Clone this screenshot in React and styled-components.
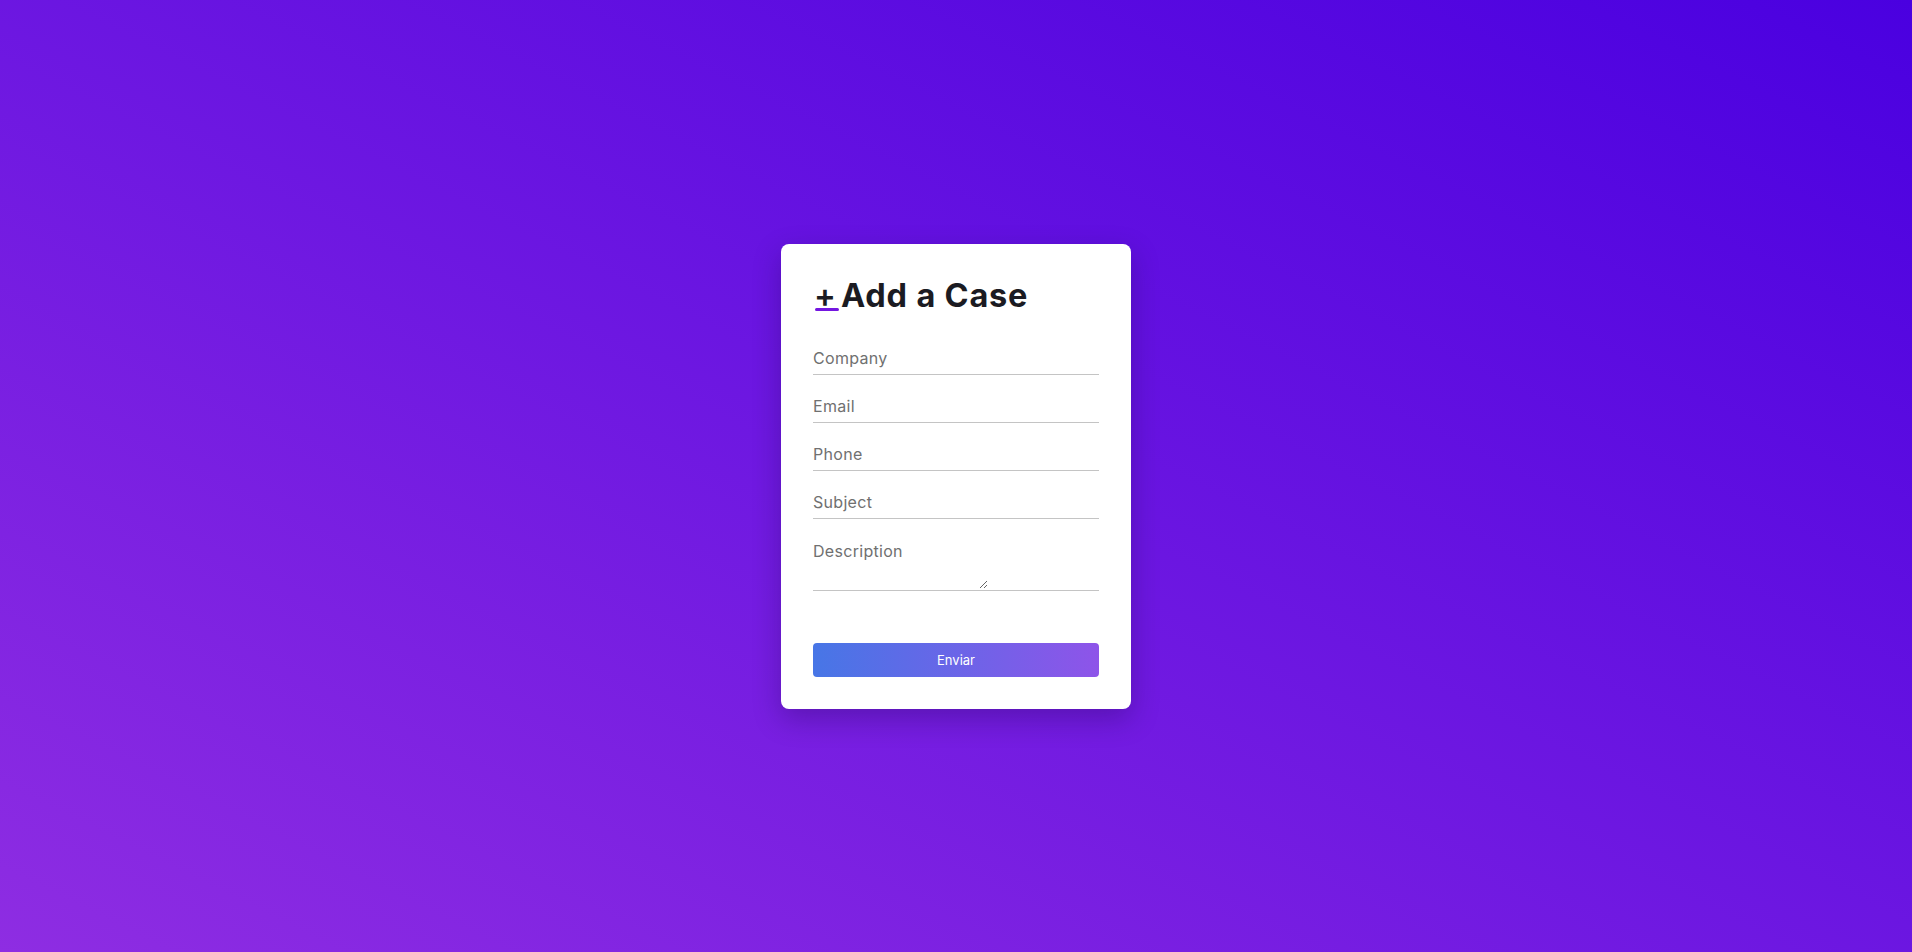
import styled, {createGlobalStyle} from 'styled-components';

const fields = ['Company', 'Email', 'Phone', 'Subject'];

export default function App() {
  return (
    <>
      <GlobalStyle />
      <Page>
        <Card>
          <Title>
            <Plus>+</Plus>Add a Case
          </Title>
          <Form onSubmit={e => e.preventDefault()}>
            {fields.map(field => (
              <Input key={field} type="text" placeholder={field} />
            ))}
            <TextareaWrap>
              <Textarea placeholder="Description" />
            </TextareaWrap>
            <Button type="submit">Enviar</Button>
          </Form>
        </Card>
      </Page>
    </>
  );
}

const GlobalStyle = createGlobalStyle`
  * {
    box-sizing: border-box;
  }

  body {
    margin: 0;
    font-family: Inter, "Noto Sans", sans-serif;
  }
`;

const Page = styled.main`
  min-height: 100vh;
  display: flex;
  align-items: center;
  justify-content: center;
  background: linear-gradient(to top right, #8e2de2, #4a00e0);
`;

const Card = styled.section`
  width: 350px;
  padding: 32px;
  background-color: #fff;
  border-radius: 8px;
  box-shadow: 0 10px 28px rgba(20, 0, 60, 0.28);
`;

const Title = styled.h1`
  margin: 0 0 21px;
  font-size: 32.5px;
  line-height: 40px;
  font-weight: 700;
  color: #1b1b22;
  letter-spacing: 0.8px;
`;

const Plus = styled.span`
  position: relative;
  display: inline-block;
  width: 28px;
  padding-left: 1px;
  font-weight: 600;

  &::after {
    content: '';
    position: absolute;
    left: 2px;
    bottom: 5px;
    width: 24px;
    height: 3px;
    border-radius: 2px;
    background-color: #7416e0;
  }
`;

const Form = styled.form`
  display: flex;
  flex-direction: column;
  gap: 10px;
`;

const Input = styled.input`
  width: 100%;
  height: 38px;
  padding: 12px 0 6px;
  border: none;
  border-bottom: 1px solid #c4c4c4;
  outline: none;
  background: transparent;
  font-family: Inter, "Noto Sans", sans-serif;
  font-size: 16px;
  line-height: 20px;
  letter-spacing: 0.3px;
  color: #333;

  &::placeholder {
    color: #707070;
  }
`;

const TextareaWrap = styled.div`
  height: 62px;
  border-bottom: 1px solid #c4c4c4;
`;

const Textarea = styled.textarea`
  display: block;
  width: 175px;
  height: 60px;
  padding: 12px 0 0;
  border: none;
  outline: none;
  background: transparent;
  font-family: Inter, "Noto Sans", sans-serif;
  font-size: 16px;
  line-height: 20px;
  letter-spacing: 0.3px;
  color: #333;

  &::placeholder {
    color: #707070;
  }
`;

const Button = styled.button`
  margin-top: 42px;
  height: 34px;
  border: none;
  border-radius: 4px;
  background: linear-gradient(to right, #4776e6, #8e54e9);
  color: #fff;
  font-family: Inter, "Noto Sans", sans-serif;
  font-size: 13px;
  cursor: pointer;
`;
